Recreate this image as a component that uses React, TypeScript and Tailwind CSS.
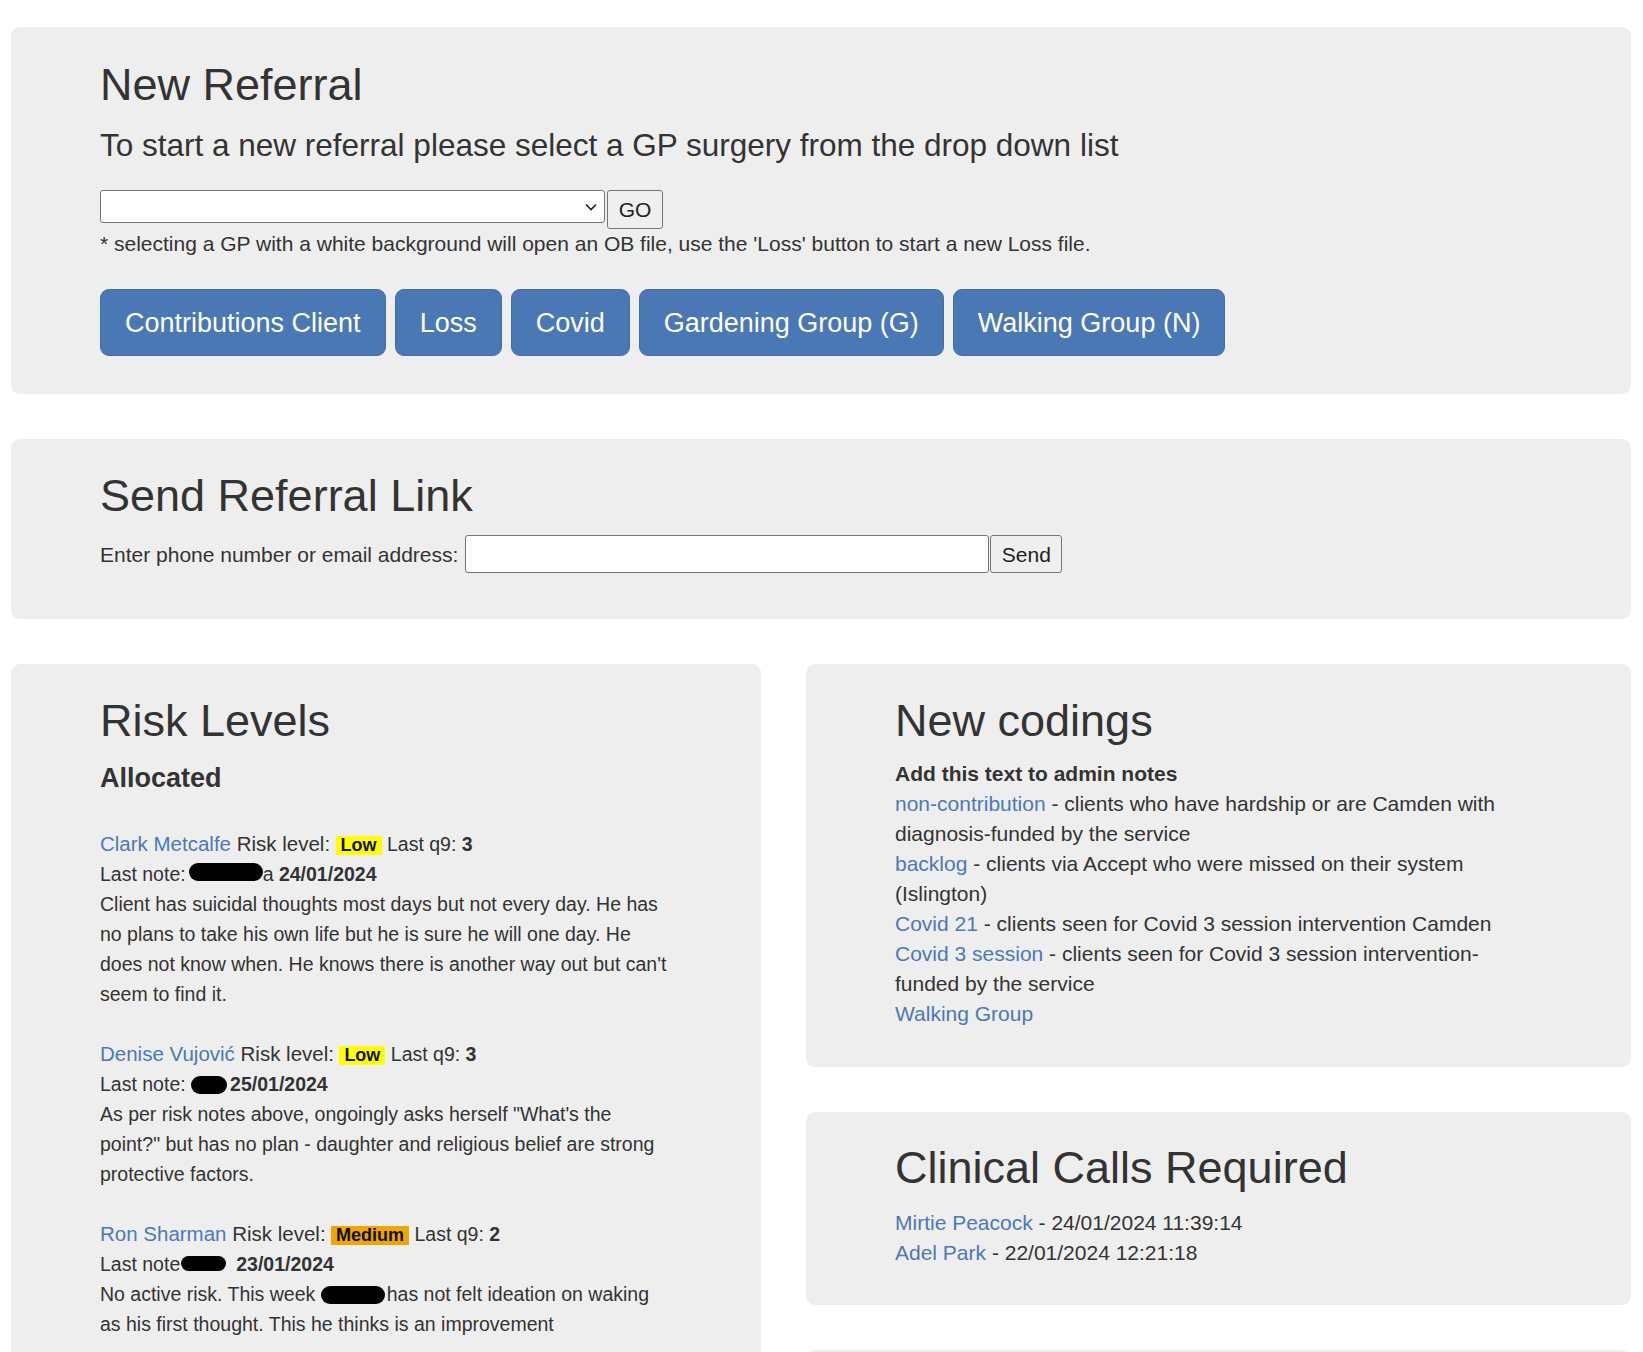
import React from "react";

const Link = ({ children }: { children: React.ReactNode }) => (
    <a href="#" className="text-[#4a79ba] no-underline">
        {children}
    </a>
);

const Blob = ({ className }: { className: string }) => (
    <span className={`inline-block rounded-full bg-black ${className}`}></span>
);

const Badge = ({ label, color }: { label: string; color: string }) => (
    <span className={`inline-block px-[5px] text-[18px] leading-[19px] font-bold text-[#111] ${color}`}>{label}</span>
);

const actionButtons = ["Contributions Client", "Loss", "Covid", "Gardening Group (G)", "Walking Group (N)"];

const codings = [
    { link: "non-contribution", text: " - clients who have hardship or are Camden with diagnosis-funded by the service" },
    { link: "backlog", text: " - clients via Accept who were missed on their system (Islington)" },
    { link: "Covid 21", text: " - clients seen for Covid 3 session intervention Camden" },
    { link: "Covid 3 session", text: " - clients seen for Covid 3 session intervention-funded by the service" },
    { link: "Walking Group", text: "" },
];

export default function App() {
    return (
        <div className="min-h-screen bg-white pl-[11px] pr-[12px] pt-[27px] font-['Liberation_Sans',Arial,sans-serif] text-[#333]">
            <div className="flex flex-col gap-[45px]">
                {/* New Referral */}
                <section className="rounded-[9px] bg-[#eeeeee] px-[89px] pt-[32px] pb-[37.6px]">
                    <h1 className="text-[45px] leading-[51px] font-normal">New Referral</h1>
                    <p className="mt-[12.6px] text-[31.5px] leading-[45px]">
                        To start a new referral please select a GP surgery from the drop down list
                    </p>
                    <div className="mt-[22.4px] flex h-[39px] items-start">
                        <div className="relative h-[33px] w-[505px] rounded-[3px] border border-[#767676] bg-white">
                            <svg
                                className="absolute right-[7px] top-[12px]"
                                width="12"
                                height="8"
                                viewBox="0 0 12 8"
                                fill="none"
                            >
                                <path d="M1 1.5L6 6.5L11 1.5" stroke="#222" strokeWidth="1.6" />
                            </svg>
                        </div>
                        <button className="ml-[2px] h-[39px] w-[56px] rounded-[3px] border border-[#767676] bg-[#efefef] text-[21px] text-[#222]">
                            GO
                        </button>
                    </div>
                    <p className="text-[21px] leading-[29.4px]">
                        * selecting a GP with a white background will open an OB file, use the 'Loss' button to start a new Loss file.
                    </p>
                    <div className="mt-[31px] flex gap-[9px]">
                        {actionButtons.map((item) => (
                            <button
                                key={item}
                                className="h-[67px] rounded-[9px] border border-[#426ea8] bg-[#4a78b5] px-[24px] text-[27px] text-white"
                            >
                                {item}
                            </button>
                        ))}
                    </div>
                </section>

                {/* Send Referral Link */}
                <section className="rounded-[9px] bg-[#eeeeee] px-[89px] pt-[31px] pb-[45.4px]">
                    <h1 className="text-[45px] leading-[51px] font-normal">Send Referral Link</h1>
                    <div className="mt-[14.3px] flex items-center">
                        <span className="text-[21px] leading-[29.4px]">Enter phone number or email address:</span>
                        <input
                            type="text"
                            className="ml-[7px] h-[38px] w-[524px] rounded-[3px] border border-[#767676] bg-white"
                        />
                        <button className="ml-[1px] h-[38px] w-[72px] rounded-[3px] border border-[#767676] bg-[#efefef] text-[21px] text-[#222]">
                            Send
                        </button>
                    </div>
                </section>

                <div className="flex items-start gap-[45px]">
                    {/* Risk Levels */}
                    <section className="w-[750px] rounded-[9px] bg-[#eeeeee] pl-[89px] pr-[91px] pt-[31px] pb-[40px]">
                        <h1 className="text-[45px] leading-[51px] font-normal">Risk Levels</h1>
                        <h3 className="mt-[17.6px] text-[27px] leading-[30px] font-bold">Allocated</h3>
                        <div className="mt-[36px] text-[19.5px] leading-[30px]">
                            <div>
                                <div>
                                    <span className="text-[20.5px]">
                                        <Link>Clark Metcalfe</Link> Risk level:
                                    </span>{" "}
                                    <Badge label="Low" color="bg-[#ffff00]" /> Last q9: <b>3</b>
                                </div>
                                <div>
                                    Last note:<Blob className="ml-[3px] h-[18px] w-[74px]" />a <b>24/01/2024</b>
                                </div>
                                <p>
                                    Client has suicidal thoughts most days but not every day. He has no plans to take his own life but he is sure he will one day. He does not know when. He knows there is another way out but can't seem to find it.
                                </p>
                            </div>
                            <div className="mt-[30px]">
                                <div>
                                    <span className="text-[20.5px]">
                                        <Link>Denise Vujović</Link> Risk level:
                                    </span>{" "}
                                    <Badge label="Low" color="bg-[#ffff00]" /> Last q9: <b>3</b>
                                </div>
                                <div>
                                    Last note: <Blob className="mr-[3px] h-[18px] w-[36px] align-[-3px]" />
                                    <b>25/01/2024</b>
                                </div>
                                <p>
                                    As per risk notes above, ongoingly asks herself "What's the point?" but has no plan - daughter and religious belief are strong protective factors.
                                </p>
                            </div>
                            <div className="mt-[30px]">
                                <div>
                                    <span className="text-[20.5px]">
                                        <Link>Ron Sharman</Link> Risk level:
                                    </span>{" "}
                                    <Badge label="Medium" color="bg-[#f0a500]" /> Last q9: <b>2</b>
                                </div>
                                <div>
                                    Last note<Blob className="ml-[1px] mr-[10px] h-[15px] w-[45px]" />
                                    <b>23/01/2024</b>
                                </div>
                                <p>
                                    No active risk. This week <Blob className="mr-[2px] h-[18px] w-[64px] align-[-3px]" />has not felt ideation on waking as his first thought. This he thinks is an improvement
                                </p>
                            </div>
                        </div>
                    </section>

                    <div className="flex flex-1 flex-col gap-[45px]">
                        {/* New codings */}
                        <section className="rounded-[9px] bg-[#eeeeee] px-[89px] pt-[31px] pb-[38.3px]">
                            <h1 className="text-[45px] leading-[51px] font-normal">New codings</h1>
                            <div className="mt-[13.4px] w-[620px] text-[21px] leading-[30px]">
                                <div className="font-bold">Add this text to admin notes</div>
                                {codings.map((c) => (
                                    <div key={c.link}>
                                        <Link>{c.link}</Link>
                                        {c.text}
                                    </div>
                                ))}
                            </div>
                        </section>

                        {/* Clinical Calls Required */}
                        <section className="rounded-[9px] bg-[#eeeeee] px-[89px] pt-[29.2px] pb-[37.3px]">
                            <h1 className="text-[45px] leading-[51px] font-normal">Clinical Calls Required</h1>
                            <div className="mt-[15.2px] text-[21px] leading-[30px]">
                                <div>
                                    <Link>Mirtie Peacock</Link> - 24/01/2024 11:39:14
                                </div>
                                <div>
                                    <Link>Adel Park</Link> - 22/01/2024 12:21:18
                                </div>
                            </div>
                        </section>

                        <section className="h-[200px] rounded-[9px] bg-[#eeeeee]"></section>
                    </div>
                </div>
            </div>
        </div>
    );
}
